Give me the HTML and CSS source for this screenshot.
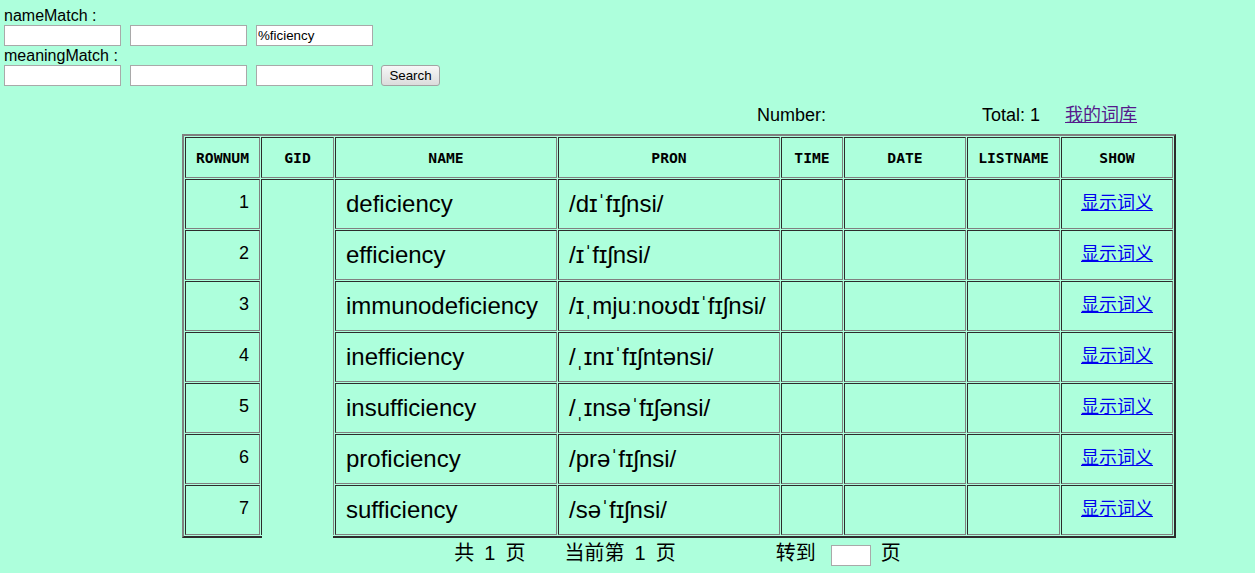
FILE: index.html
```html
<!DOCTYPE html>
<html>
<head>
<meta charset="utf-8">
<title>Word search</title>
<link rel="stylesheet" href="styles.css">
</head>
<body>
<form class="search">
  <div class="label">nameMatch :</div>
  <div class="fields">
    <input class="field" type="text">
    <input class="field" type="text">
    <input class="field" type="text" value="%ficiency">
  </div>
  <div class="label">meaningMatch :</div>
  <div class="fields">
    <input class="field" type="text">
    <input class="field" type="text">
    <input class="field" type="text">
    <button class="btn" type="button">Search</button>
  </div>
</form>
<div class="result">
  <div class="summary">
    <span class="number">Number:</span>
    <span class="total">Total: 1</span>
    <a class="mylib" href="#">我的词库</a>
  </div>
  <table class="words">
    <thead>
      <tr>
        <th class="c-rownum">ROWNUM</th>
        <th class="c-gid">GID</th>
        <th class="c-name">NAME</th>
        <th class="c-pron">PRON</th>
        <th class="c-time">TIME</th>
        <th class="c-date">DATE</th>
        <th class="c-list">LISTNAME</th>
        <th class="c-show">SHOW</th>
      </tr>
    </thead>
    <tbody>
      <tr>
        <td class="num">1</td>
        <td class="gid" rowspan="7"></td>
        <td class="word">deficiency</td>
        <td class="word">/dɪˈfɪʃnsi/</td>
        <td></td><td></td><td></td>
        <td class="show"><a href="#">显示词义</a></td>
      </tr>
      <tr>
        <td class="num">2</td>
        <td class="word">efficiency</td>
        <td class="word">/ɪˈfɪʃnsi/</td>
        <td></td><td></td><td></td>
        <td class="show"><a href="#">显示词义</a></td>
      </tr>
      <tr>
        <td class="num">3</td>
        <td class="word">immunodeficiency</td>
        <td class="word">/ɪˌmjuːnoʊdɪˈfɪʃnsi/</td>
        <td></td><td></td><td></td>
        <td class="show"><a href="#">显示词义</a></td>
      </tr>
      <tr>
        <td class="num">4</td>
        <td class="word">inefficiency</td>
        <td class="word">/ˌɪnɪˈfɪʃntənsi/</td>
        <td></td><td></td><td></td>
        <td class="show"><a href="#">显示词义</a></td>
      </tr>
      <tr>
        <td class="num">5</td>
        <td class="word">insufficiency</td>
        <td class="word">/ˌɪnsəˈfɪʃənsi/</td>
        <td></td><td></td><td></td>
        <td class="show"><a href="#">显示词义</a></td>
      </tr>
      <tr>
        <td class="num">6</td>
        <td class="word">proficiency</td>
        <td class="word">/prəˈfɪʃnsi/</td>
        <td></td><td></td><td></td>
        <td class="show"><a href="#">显示词义</a></td>
      </tr>
      <tr>
        <td class="num">7</td>
        <td class="word">sufficiency</td>
        <td class="word">/səˈfɪʃnsi/</td>
        <td></td><td></td><td></td>
        <td class="show"><a href="#">显示词义</a></td>
      </tr>
    </tbody>
  </table>
  <div class="pager">
    <span class="seg">共 1 页</span>
    <span class="seg cur">当前第 1 页</span>
    <span class="seg go">转到</span>
    <input class="page-input" type="text">
    <span class="seg last">页</span>
  </div>
</div>
</body>
</html>
```
FILE: styles.css
```css
html, body {
  margin: 0;
  padding: 0;
  background: #adffdc;
  color: #000;
  font-family: "Liberation Sans", "Noto Sans CJK SC", sans-serif;
}

.search {
  margin: 0;
  padding: 6px 4px 0;
  font-size: 16px;
}

.label {
  line-height: 19px;
  height: 19px;
}

.fields {
  display: flex;
  gap: 9px;
  height: 21px;
}

.field {
  box-sizing: border-box;
  width: 117px;
  height: 21px;
  margin: 0;
  padding: 1px 1px;
  border: 1px solid #a9a9a9;
  background: #fff;
  font: 13.33px "Liberation Sans", sans-serif;
  color: #000;
  outline: none;
}

.btn {
  box-sizing: border-box;
  width: 59px;
  height: 21px;
  margin: 0 0 0 -1px;
  padding: 0;
  border: 1px solid #a3a3a3;
  border-radius: 3px;
  background: linear-gradient(#f7f7f7, #dcdcdc);
  font: 13.33px "Liberation Sans", sans-serif;
  color: #000;
}

.result {
  margin-left: 182px;
  width: 994px;
}

.summary {
  display: flex;
  justify-content: flex-end;
  margin-top: 19px;
  padding-right: 39px;
  font-size: 18px;
  line-height: 21px;
  height: 21px;
}

.total {
  margin-left: 156px;
}

.mylib {
  margin-left: 25px;
  color: #551a8b;
}

.words {
  margin-top: 8px;
  width: 994px;
  table-layout: fixed;
  border-collapse: separate;
  border-spacing: 1px;
  border: 2px outset #808080;
}

.words th,
.words td {
  box-sizing: border-box;
  border: 1px inset #808080;
  padding: 10px;
}

.words th {
  font: bold 14.7px "DejaVu Sans Mono", monospace;
  line-height: 20px;
  padding: 10px 0 9px;
  text-align: center;
}

.c-rownum { width: 75px; }
.c-gid { width: 73px; }
.c-name { width: 222px; }
.c-pron { width: 222px; }
.c-time { width: 62px; }
.c-date { width: 122px; }
.c-list { width: 93px; }
.c-show { width: 112px; }

.words td {
  line-height: 28px;
  font-size: 24px;
}

.words td.num {
  font-size: 18px;
  text-align: right;
  padding: 8px 10px 12px;
}

.words td.gid {
  border-bottom: none;
  box-shadow: 0 4px 0 -1px #adffdc;
}

.words td.word {
  text-align: left;
}

.words td.show {
  text-align: center;
  font-size: 18px;
  padding: 9px 10px 11px;
}

.show a {
  color: #0000ee;
}

.pager {
  display: flex;
  justify-content: center;
  align-items: baseline;
  margin-top: 2px;
  padding-right: 3px;
  font-size: 20px;
  line-height: 26px;
  word-spacing: 4.5px;
}

.cur { margin-left: 39px; }
.go { margin-left: 100px; }

.page-input {
  box-sizing: border-box;
  width: 40px;
  height: 21px;
  margin: 0 0 0 15px;
  padding: 1px;
  border: 1px solid #a9a9a9;
  background: #fff;
  font: 13.33px "Liberation Sans", sans-serif;
  outline: none;
}

.last { margin-left: 10px; }
```
